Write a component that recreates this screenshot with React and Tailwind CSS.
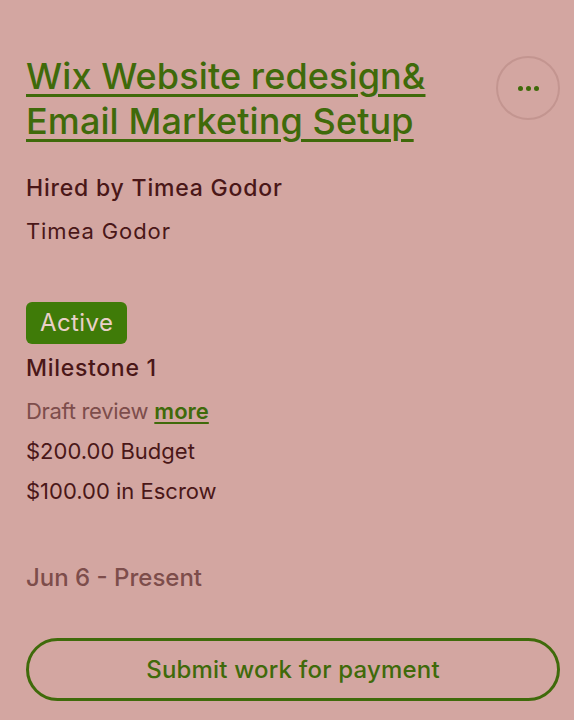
export default function App() {
  return (
    <div className="w-full min-h-screen bg-[#d3a6a1] pl-[26px] pr-[14px] pt-[54px] pb-5 text-[#4a1718]" style={{ fontFamily: "Inter, 'Liberation Sans', sans-serif" }}>
      <div className="flex items-start justify-between">
        <h1 className="text-[36px] leading-[45px] font-medium tracking-[0.1px] text-[#3f6a0a] underline decoration-[2.5px] underline-offset-[5px] max-w-[450px]">
          Wix Website redesign&amp; Email Marketing Setup
        </h1>
        <button className="w-[64px] h-[64px] shrink-0 rounded-full border-[2px] border-[#c39590] flex items-center justify-center gap-[3px] mt-[2px]">
          <span className="w-[5px] h-[5px] rounded-full bg-[#3f6a0a]" />
          <span className="w-[5px] h-[5px] rounded-full bg-[#3f6a0a]" />
          <span className="w-[5px] h-[5px] rounded-full bg-[#3f6a0a]" />
        </button>
      </div>

      <div className="mt-[23px] leading-[43px]">
        <p className="text-[23px] font-medium tracking-[0.8px]">Hired by Timea Godor</p>
        <p className="text-[22px] tracking-[0.9px]">Timea Godor</p>
      </div>

      <div className="mt-[49px]">
        <span className="inline-flex items-center h-[42px] px-[14px] rounded-[6px] bg-[#3f7b08] text-[#ead0c8] text-[24px] tracking-[0.4px]">
          Active
        </span>
      </div>
      <div className="mt-[4px] text-[22px] leading-[40px]">
        <p className="text-[23px] font-medium tracking-[0.7px]">Milestone 1</p>
        <p className="mt-[3px] text-[#7d4d4b]">
          <span className="tracking-[-0.3px]">Draft review</span>{" "}
          <span className="font-semibold text-[#3f6a0a] underline decoration-[2px] underline-offset-[3px]">more</span>
        </p>
        <p>$200.00 Budget</p>
        <p>$100.00 in Escrow</p>
      </div>

      <p className="mt-[47px] text-[24px] leading-[40px] font-medium text-[#7d4d4b]">Jun 6 - Present</p>

      <button className="mt-[40px] w-full h-[63px] rounded-full border-[3px] border-[#3f6a0a] text-[#3f6a0a] text-[24px] font-medium tracking-[0.2px]">
        Submit work for payment
      </button>
    </div>
  );
}
